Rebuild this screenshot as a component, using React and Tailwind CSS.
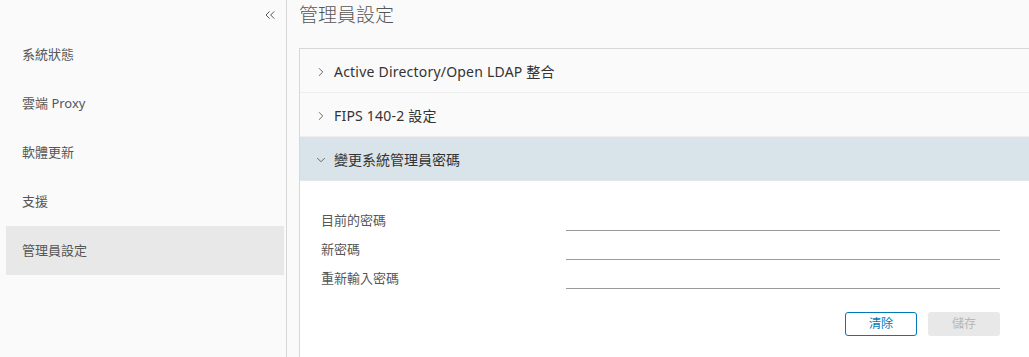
import { ChevronRight, ChevronDown, ChevronsLeft } from 'lucide-react';

const font = { fontFamily: '"Noto Sans", "Noto Sans CJK TC", sans-serif' };

const navItems = ['系統狀態', '雲端 Proxy', '軟體更新', '支援', '管理員設定'];

const App = () => {
    return (
        <div className="flex w-[1029px] h-[357px] overflow-hidden bg-[#fafafa] text-[#565656]" style={font}>
            {/* Sidebar */}
            <aside className="w-[287px] shrink-0 border-r border-[#d7d7d7] flex flex-col">
                <div className="h-[30px] flex justify-end items-center pr-[8px]">
                    <ChevronsLeft className="w-[16px] h-[16px] text-[#555]" strokeWidth={1.5} />
                </div>
                <nav className="flex flex-col pl-[6px] pr-[2px]">
                    {navItems.map((item, i) => (
                        <div
                            key={item}
                            className={`h-[49px] flex items-center pl-4 text-[13px] ${i === 4 ? 'bg-[#e8e8e8]' : ''}`}
                        >
                            {item}
                        </div>
                    ))}
                </nav>
            </aside>

            {/* Main */}
            <main className="flex-1 pl-3 flex flex-col">
                <h1 className="h-[31px] text-[19px] font-light leading-none pt-[6px] text-[#565656]">管理員設定</h1>
                <div className="mt-[17px] border-t border-l border-[#d7d7d7] flex-1 flex flex-col">
                    <div className="h-[44px] flex items-center border-b border-[#eee] pl-[14px] pt-[2px] text-[14px] text-[#333] tracking-[0.015em]">
                        <ChevronRight className="w-[14px] h-[14px] text-[#555] mr-[6px]" strokeWidth={1.5} />
                        Active Directory/Open LDAP 整合
                    </div>
                    <div className="h-[44px] flex items-center border-b border-[#eee] pl-[14px] pt-[2px] text-[14px] text-[#333] tracking-[0.015em]">
                        <ChevronRight className="w-[14px] h-[14px] text-[#555] mr-[6px]" strokeWidth={1.5} />
                        FIPS 140-2 設定
                    </div>
                    <div className="h-[44px] flex items-center border-b border-[#e6e6e6] pl-[14px] pt-[2px] text-[14px] text-[#333] bg-[#d9e4ea]">
                        <ChevronDown className="w-[14px] h-[14px] text-[#555] mr-[6px]" strokeWidth={1.5} />
                        變更系統管理員密碼
                    </div>
                    <div className="flex-1 bg-white pl-[21px] pr-[29px] pt-[25px]">
                        {['目前的密碼', '新密碼', '重新輸入密碼'].map((label) => (
                            <div key={label} className="h-[29px] flex items-center text-[13px] text-[#565656]">
                                <span className="w-[245px] shrink-0 leading-none">{label}</span>
                                <div className="flex-1 self-end border-b border-[#9a9a9a] h-[1px] mb-[4px]" />
                            </div>
                        ))}
                        <div className="flex justify-end gap-[11px] mt-[19px]">
                            <button className="w-[72px] h-[24px] border border-[#0079b8] rounded-[3px] text-[12px] text-[#0079b8] bg-white">
                                清除
                            </button>
                            <button className="w-[72px] h-[24px] rounded-[3px] text-[12px] text-[#b7b7b7] bg-[#e8e8e8]">
                                儲存
                            </button>
                        </div>
                    </div>
                </div>
            </main>
        </div>
    );
};

export default App;
